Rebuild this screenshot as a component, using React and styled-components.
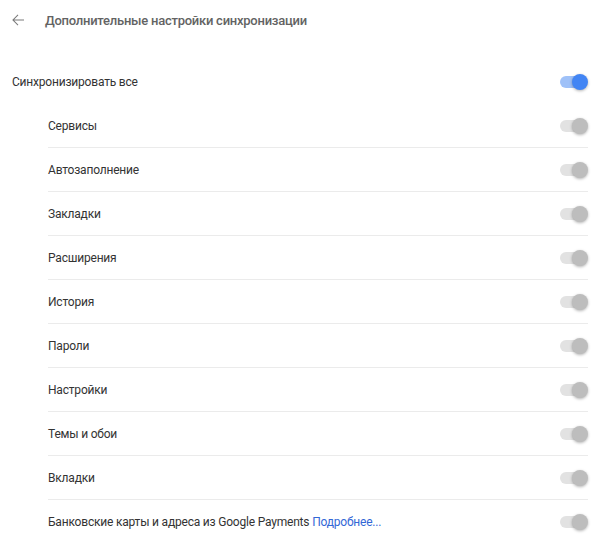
import React from "react";
import styled, { createGlobalStyle } from "styled-components";

const Global = createGlobalStyle`
  html, body { margin: 0; padding: 0; background: #fff; }
  body { font-family: Roboto, "Noto Sans", Arial, sans-serif; font-size: 12px; color: #333; }
`;

const Page = styled.div`
  width: 602px;
  height: 534px;
  overflow: hidden;
  background: #fff;
`;

const Header = styled.div`
  display: flex;
  align-items: center;
  height: 40px;
  padding-left: 9px;
`;

const BackButton = styled.button`
  display: flex;
  align-items: center;
  justify-content: center;
  width: 18px;
  height: 18px;
  padding: 0;
  border: 0;
  background: none;
  margin-right: 18px;
  color: #7a7a7a;
`;

const Title = styled.h1`
  margin: 0;
  font-size: 13px;
  font-weight: 500;
  letter-spacing: -0.25px;
  color: #636363;
`;

const MainRow = styled.div`
  display: flex;
  align-items: center;
  justify-content: space-between;
  height: 43px;
  margin-top: 20px;
  padding: 0 14px 0 12px;
`;

const List = styled.div`
  margin: 0 14px 0 48px;
`;

const Row = styled.div`
  display: flex;
  align-items: center;
  justify-content: space-between;
  box-sizing: border-box;
  height: 44px;
  border-top: 1px solid ${(p) => (p.$first ? "transparent" : "#ebebeb")};
`;

const Label = styled.span`
  color: #333;
  letter-spacing: -0.2px;
`;

const Link = styled.a`
  color: #3367d6;
  text-decoration: none;
`;

const ToggleWrap = styled.div`
  position: relative;
  width: 28px;
  height: 16px;
  flex: none;
`;

const Track = styled.div`
  position: absolute;
  left: 0;
  top: 2px;
  width: 26px;
  height: 12px;
  border-radius: 6px;
  background: ${(p) => (p.$on ? "#9fc1f8" : "#e2e2e2")};
`;

const Knob = styled.div`
  position: absolute;
  right: 0;
  top: 0;
  width: 16px;
  height: 16px;
  border-radius: 50%;
  background: ${(p) => (p.$on ? "#4285f4" : "#bdbdbd")};
  box-shadow: 0 1px 3px rgba(0, 0, 0, 0.3);
`;

const Toggle = ({ on }) => (
  <ToggleWrap>
    <Track $on={on} />
    <Knob $on={on} />
  </ToggleWrap>
);

const items = [
  "Сервисы",
  "Автозаполнение",
  "Закладки",
  "Расширения",
  "История",
  "Пароли",
  "Настройки",
  "Темы и обои",
  "Вкладки",
];

export default function App() {
  return (
    <Page>
      <Global />
      <Header>
        <BackButton aria-label="Назад">
          <svg width="18" height="18" viewBox="0 0 24 24" fill="currentColor">
            <path d="M20 11.25H6.9l5.6-5.6-0.95-0.9L4.3 12l7.25 7.25 0.95-0.9-5.6-5.6H20v-1.5z" />
          </svg>
        </BackButton>
        <Title>Дополнительные настройки синхронизации</Title>
      </Header>
      <MainRow>
        <Label>Синхронизировать все</Label>
        <Toggle on />
      </MainRow>
      <List>
        {items.map((t, i) => (
          <Row key={t} $first={i === 0}>
            <Label>{t}</Label>
            <Toggle />
          </Row>
        ))}
        <Row>
          <Label>
            Банковские карты и адреса из Google Payments{" "}
            <Link href="#">Подробнее...</Link>
          </Label>
          <Toggle />
        </Row>
      </List>
    </Page>
  );
}
